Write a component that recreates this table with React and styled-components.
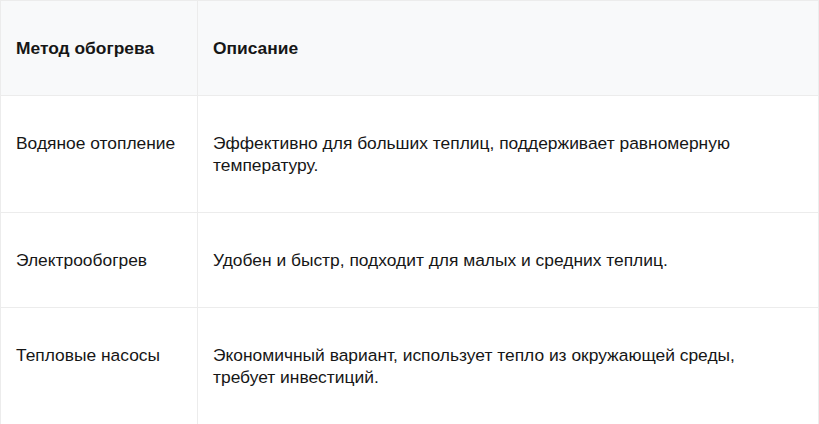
import React from 'react';
import styled, { createGlobalStyle } from 'styled-components';

const GlobalStyle = createGlobalStyle`
  body {
    margin: 0;
    background: #ffffff;
    font-family: "Liberation Sans", Arial, sans-serif;
  }
`;

const Tableau = styled.table`
  width: 100%;
  border-collapse: collapse;
  font-size: 17.4px;
  line-height: 22px;
  color: #161616;
`;

const Entete = styled.thead`
  background: #f8f9fa;
`;

const Cellule = styled.td`
  padding: 36px 15px 36px;
  padding-right: ${props => (props.$description ? '24px' : '15px')};
  border: 1px solid #ececec;
  text-align: left;
  vertical-align: top;
  white-space: ${props => (props.$description ? 'normal' : 'nowrap')};
  font-weight: ${props => (props.$titre ? 700 : 400)};
`;

const lignes = [
  {
    methode: 'Водяное отопление',
    description: 'Эффективно для больших теплиц, поддерживает равномерную температуру.',
  },
  {
    methode: 'Электрообогрев',
    description: 'Удобен и быстр, подходит для малых и средних теплиц.',
  },
  {
    methode: 'Тепловые насосы',
    description: 'Экономичный вариант, использует тепло из окружающей среды, требует инвестиций.',
  },
];

export default function App() {
  return (
    <>
      <GlobalStyle />
      <Tableau>
        <colgroup>
          <col style={{ width: '197px' }} />
          <col />
        </colgroup>
        <Entete>
          <tr>
            <Cellule as="th" $titre>Метод обогрева</Cellule>
            <Cellule as="th" $titre $description>Описание</Cellule>
          </tr>
        </Entete>
        <tbody>
          {lignes.map((ligne, index) => (
            <tr key={index}>
              <Cellule>{ligne.methode}</Cellule>
              <Cellule $description>{ligne.description}</Cellule>
            </tr>
          ))}
        </tbody>
      </Tableau>
    </>
  );
}
